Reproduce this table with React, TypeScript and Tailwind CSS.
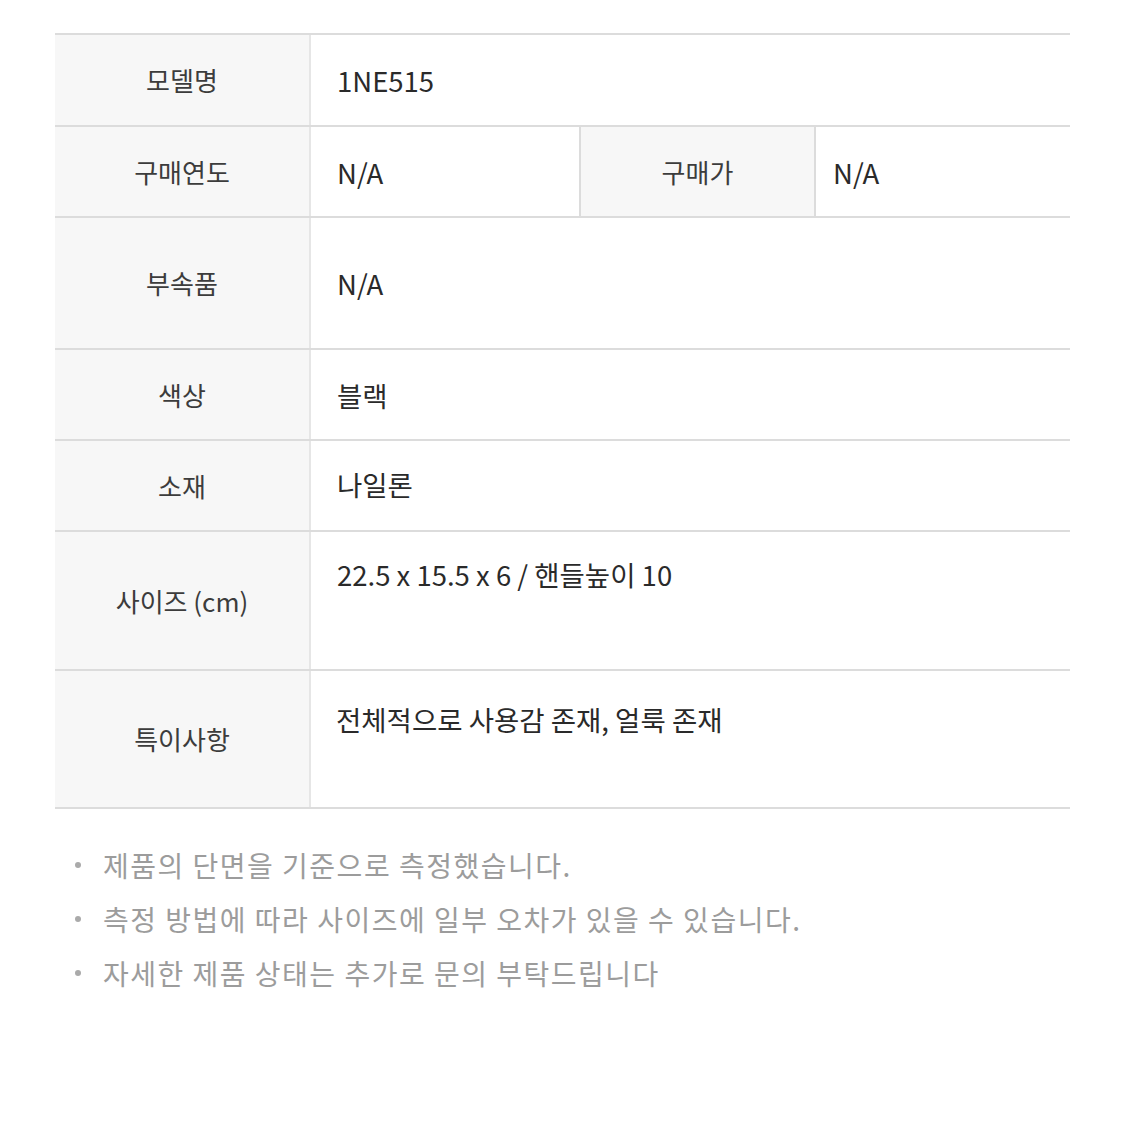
import React from "react";

const font = { fontFamily: '"Noto Sans CJK KR", "Noto Sans", sans-serif' };

function Label({ children, className = "" }: { children: React.ReactNode; className?: string }) {
  return (
    <div className={`flex items-center justify-center bg-[#f7f7f7] text-[26px] text-[#3c3c3c] ${className}`}>
      {children}
    </div>
  );
}

const val = "text-[27.5px] text-[#2a2a2a]";

export default function App() {
  return (
    <div className="w-[1125px] h-[1125px] bg-white pt-[33px] pl-[55px]" style={font}>
      <div className="w-[1015px] border-t-2 border-[#dcdcdc] leading-[36px]">
        {/* Row 1 */}
        <div className="flex h-[92px] border-b-2 border-[#dcdcdc]">
          <Label className="w-[256px] border-r-2 border-[#e6e6e6]">모델명</Label>
          <div className={`flex-1 flex items-center pl-[26px] ${val}`}>1NE515</div>
        </div>
        {/* Row 2 */}
        <div className="flex h-[91px] border-b-2 border-[#dcdcdc]">
          <Label className="w-[256px] border-r-2 border-[#e6e6e6]">구매연도</Label>
          <div className={`w-[270px] flex items-center pl-[26px] border-r-2 border-[#dcdcdc] ${val}`}>N/A</div>
          <Label className="w-[235px] border-r-2 border-[#dcdcdc]">구매가</Label>
          <div className={`flex-1 flex items-center pl-[17px] ${val}`}>N/A</div>
        </div>
        {/* Row 3 */}
        <div className="flex h-[132px] border-b-2 border-[#dcdcdc]">
          <Label className="w-[256px] border-r-2 border-[#e6e6e6]">부속품</Label>
          <div className={`flex-1 flex items-center pl-[26px] ${val}`}>N/A</div>
        </div>
        {/* Row 4 */}
        <div className="flex h-[91px] border-b-2 border-[#dcdcdc]">
          <Label className="w-[256px] border-r-2 border-[#e6e6e6]">색상</Label>
          <div className={`flex-1 flex items-center pl-[26px] ${val}`}>블랙</div>
        </div>
        {/* Row 5 */}
        <div className="flex h-[91px] border-b-2 border-[#dcdcdc]">
          <Label className="w-[256px] border-r-2 border-[#e6e6e6]">소재</Label>
          <div className={`flex-1 flex items-center pl-[26px] pb-[4px] ${val}`}>나일론</div>
        </div>
        {/* Row 6 */}
        <div className="flex h-[139px] border-b-2 border-[#dcdcdc]">
          <Label className="w-[256px] border-r-2 border-[#e6e6e6]">사이즈 (cm)</Label>
          <div className={`flex-1 pl-[26px] pt-[24px] ${val}`}>22.5 x 15.5 x 6 / 핸들높이 10</div>
        </div>
        {/* Row 7 */}
        <div className="flex h-[138px] border-b-2 border-[#dcdcdc]">
          <Label className="w-[256px] border-r-2 border-[#e6e6e6]">특이사항</Label>
          <div className={`flex-1 pl-[25px] pt-[30px] ${val}`}>전체적으로 사용감 존재, 얼룩 존재</div>
        </div>
      </div>

      <ul className="mt-[38px] flex flex-col gap-[18px] text-[28px] leading-[36px] tracking-[1.5px] text-[#9c9c9c]">
        {[
          "제품의 단면을 기준으로 측정했습니다.",
          "측정 방법에 따라 사이즈에 일부 오차가 있을 수 있습니다.",
          "자세한 제품 상태는 추가로 문의 부탁드립니다",
        ].map((t) => (
          <li key={t} className="flex items-center">
            <span className="w-[6px] h-[6px] rounded-full bg-[#aaaaaa] ml-[20px] mr-[22px]" />
            <span>{t}</span>
          </li>
        ))}
      </ul>
    </div>
  );
}
